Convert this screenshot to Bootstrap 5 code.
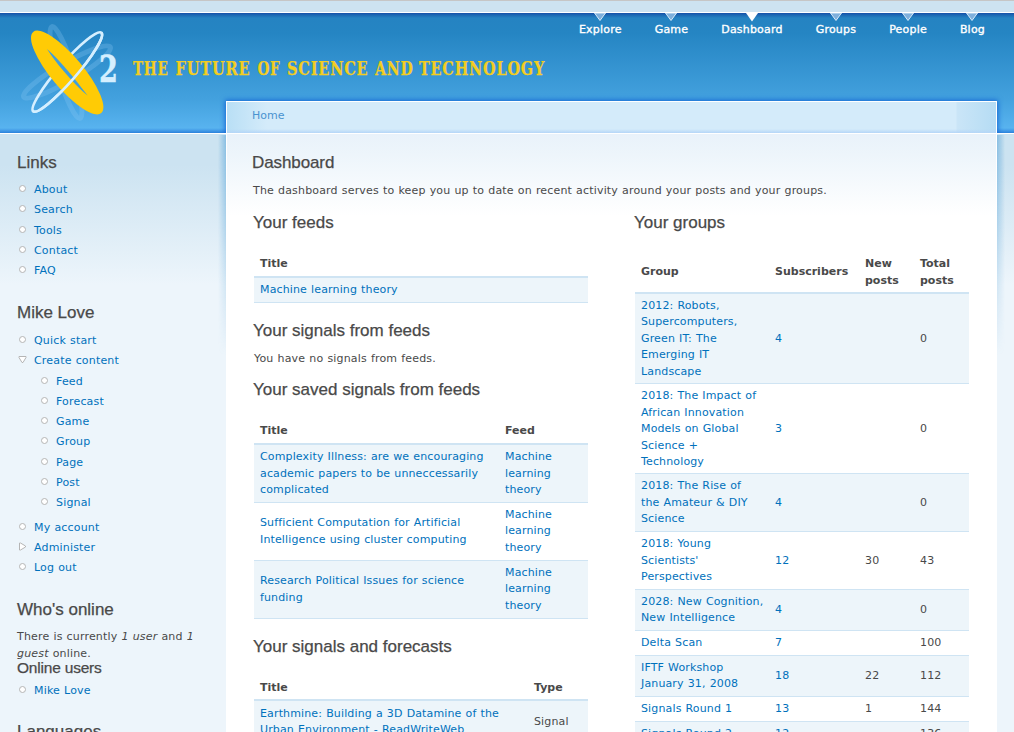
<!DOCTYPE html>
<html lang="en">
<head>
<meta charset="utf-8">
<title>Dashboard | X2</title>
<link href="https://cdn.jsdelivr.net/npm/bootstrap@5.3.0/dist/css/bootstrap.min.css" rel="stylesheet">
<script src="https://cdn.jsdelivr.net/npm/bootstrap@5.3.0/dist/js/bootstrap.bundle.min.js"></script>
<style>
html,body{height:732px;overflow:hidden}
body{font:11px/16.5px "DejaVu Sans",sans-serif;letter-spacing:.17px;word-spacing:.4px;color:#494949;background:#edf5fa linear-gradient(#cce3f1 134px,#cce3f1 165px,#edf5fb 285px) no-repeat}
a{color:#0071bc;text-decoration:none}
h1,h2,h3{font:17px/21px "Liberation Sans",sans-serif;letter-spacing:0;word-spacing:0;margin:0;color:#494949;-webkit-text-stroke:.25px #494949;white-space:nowrap}
h1{letter-spacing:-.1px}
.side h3{font-size:15.500px;letter-spacing:-.2px;line-height:20px;margin:-4px 0 1px}
.topline{height:13px;background:#cde3f1;border-top:1px solid #c6c6c6;border-bottom:1px solid #fff}
.masthead{height:121px;border-bottom:1px solid #fff;background:linear-gradient(#1750a8,#1c68b3 2px,#2583c2 5px,#2585c3 20px,#43a1de 86px,#58b3ef 115px,#3f97e6 118px,#2a81da 120px)}
.logo{width:560px;height:120px}
.slogan{font:700 18.500px "DejaVu Serif",serif;fill:#f3cd20;stroke:#f3cd20;stroke-width:.25px;letter-spacing:1px;word-spacing:0}
.menu{gap:33px;padding-right:29px}
.menu a{color:#fff;-webkit-text-stroke:.35px #fff;letter-spacing:.2px}
.menu svg{width:12px;height:9px}
.side{width:226px;padding:18px 17px 0;flex:none}
.side ul{list-style:none;margin:7px 0 20.500px;padding:0}
.side li{line-height:20.3px;padding-left:17px}
.side li>svg{float:left;width:9px;height:9px;margin:4px 0 0 -16px}
.side ul ul{margin:0 0 4px 5px}
.side .own{margin-top:8px;margin-bottom:20.500px}
.side .online{margin-top:3px;margin-bottom:20px}
.panel{width:771px;margin-top:-33px;position:relative;z-index:0;border:solid #fff;border-width:1px 1px 0;background:#fff}
.panel::before,.panel::after{content:"";position:absolute;top:33px;width:8px;height:220px;pointer-events:none}
.panel::before{left:-9px;background:linear-gradient(90deg,#5aa5d800,#5aa5d899);-webkit-mask:linear-gradient(#000,transparent)}
.panel::after{right:-9px;background:linear-gradient(-90deg,#5aa5d800,#5aa5d899);-webkit-mask:linear-gradient(#000,transparent)}
.crumb{height:32px;padding:6px 25px;border-bottom:1px solid #fff;background:linear-gradient(#fff0 27px,#b5d6f7 31px),linear-gradient(90deg,#b9dff5,#d4ebfa 40px,#d4ebfa 729px,#cae5f7 730px,#b5dcf4)}
.crumb a{color:#4a93d0;letter-spacing:0}
.glow{position:absolute;z-index:-1;left:-8px;right:-8px;top:-9px;height:40px;overflow:hidden}
.glow::before{content:"";position:absolute;left:7px;right:7px;top:8px;height:60px;box-shadow:0 0 5px 1px #1668d5}
.inner{padding:18px 0 0 25px;background:linear-gradient(#e9f2fa,#edf5fb 20px,#fff 82px)}
.intro{margin:10px 0 12px 1px}
.dcol{width:335px}
.data{width:334px;margin:21px 0 17px 1px;table-layout:fixed}
.data th{padding:2px 6px 2px;border-bottom:2px solid #cfe4f3;vertical-align:top;letter-spacing:0;word-spacing:0}
.data thead tr{height:23px}
.groups th{vertical-align:middle}
.groups thead tr{height:39px}
.data td{padding:3px 6px;border-bottom:1px solid #cfe4f3;vertical-align:middle;white-space:nowrap;letter-spacing:.14px}
.data tbody tr:nth-child(odd){background:#edf5fa}
.data .h90 td{padding:4px 6px 2px}
.data .h58 td{padding:3.500px 6px 2.500px}
.data .h91 td{padding:4px 6px 2.500px}
.data.forecasts{margin-top:20px}
.data.forecasts th{padding:3px 6px 1px}
.data.forecasts td{padding:5px 6px 3px}
.h91{height:91px}.h90{height:90px}.h58{height:58px}.h41{height:41px}.h26{height:26px}.h25{height:25px}
</style>
</head>
<body>
<svg class="d-none"><defs>
<symbol id="dot" viewBox="0 0 9 9"><circle cx="4.5" cy="4.5" r="3" fill="#fff" stroke="#b5b5b5"/></symbol>
<symbol id="down" viewBox="0 0 9 9"><path d="M1 2.500V1.500H8V2.500L5 7.500H4Z" fill="#fff" stroke="#b5b5b5"/></symbol>
<symbol id="right" viewBox="0 0 9 9"><path d="M1.500 1H2.500L7.500 4V5L2.500 8H1.500Z" fill="#fff" stroke="#b5b5b5"/></symbol>
<symbol id="tab" viewBox="0 0 12 9"><path d="M.5 0H11.500L6 7.500Z" fill="#7fb0dc" stroke="#d8ebfa"/></symbol>
<symbol id="tabon" viewBox="0 0 12 9"><path d="M0 0H12L6 8.500Z" fill="#fff"/></symbol>
</defs></svg>
<div class="topline"></div>
<header class="masthead d-flex justify-content-between">
<svg class="logo flex-shrink-0" viewBox="0 13 560 120">
<g fill="none" stroke="#8cc9f3" stroke-opacity=".28" stroke-width="5"><ellipse cx="66" cy="72.500" rx="8" ry="48" transform="rotate(-17 66 72.500)"/><ellipse cx="67" cy="72" rx="9" ry="50" transform="rotate(60 67 72)"/></g>
<ellipse cx="67.300" cy="72" rx="9" ry="52" transform="rotate(41 67.300 72)" fill="none" stroke="#d5efff" stroke-width="2.700"/>
<ellipse cx="67.200" cy="72.500" rx="16" ry="53" transform="rotate(-40 67.200 72.500)" fill="#ffcb05"/>
<path fill="#409edb" d="M47 49C57 57 76 80 87.500 95.500C77 87 57 65 47 49Z"/>
<path d="M0-52A9 52 0 0 1 0 52" transform="translate(67.300 72) rotate(41)" fill="none" stroke="#d5efff" stroke-width="2.700"/>
<text x="99" y="82" font-family="DejaVu Serif" font-weight="700" font-size="37" textLength="19" lengthAdjust="spacingAndGlyphs" fill="#d5efff" stroke="#d5efff" stroke-width=".5">2</text>
<g class="slogan">
<text x="133" y="74.500" textLength="35.500" lengthAdjust="spacingAndGlyphs">THE</text>
<text x="175.500" y="74.500" textLength="75" lengthAdjust="spacingAndGlyphs">FUTURE</text>
<text x="257.500" y="74.500" textLength="23" lengthAdjust="spacingAndGlyphs">OF</text>
<text x="287" y="74.500" textLength="81.500" lengthAdjust="spacingAndGlyphs">SCIENCE</text>
<text x="375" y="74.500" textLength="38.500" lengthAdjust="spacingAndGlyphs">AND</text>
<text x="419" y="74.500" textLength="126" lengthAdjust="spacingAndGlyphs">TECHNOLOGY</text>
</g>
</svg>
<nav class="menu d-flex">
<a class="d-flex flex-column align-items-center" href="#"><svg><use href="#tab"/></svg>Explore</a>
<a class="d-flex flex-column align-items-center" href="#"><svg><use href="#tab"/></svg>Game</a>
<a class="d-flex flex-column align-items-center" href="#"><svg><use href="#tabon"/></svg>Dashboard</a>
<a class="d-flex flex-column align-items-center" href="#"><svg><use href="#tab"/></svg>Groups</a>
<a class="d-flex flex-column align-items-center" href="#"><svg><use href="#tab"/></svg>People</a>
<a class="d-flex flex-column align-items-center" href="#"><svg><use href="#tab"/></svg>Blog</a>
</nav>
</header>
<div class="d-flex">
<aside class="side">
<h2>Links</h2>
<ul>
<li><svg><use href="#dot"/></svg><a href="#">About</a></li>
<li><svg><use href="#dot"/></svg><a href="#">Search</a></li>
<li><svg><use href="#dot"/></svg><a href="#">Tools</a></li>
<li><svg><use href="#dot"/></svg><a href="#">Contact</a></li>
<li><svg><use href="#dot"/></svg><a href="#">FAQ</a></li>
</ul>
<h2>Mike Love</h2>
<ul class="own">
<li><svg><use href="#dot"/></svg><a href="#">Quick start</a></li>
<li><svg><use href="#down"/></svg><a href="#">Create content</a>
<ul>
<li><svg><use href="#dot"/></svg><a href="#">Feed</a></li>
<li><svg><use href="#dot"/></svg><a href="#">Forecast</a></li>
<li><svg><use href="#dot"/></svg><a href="#">Game</a></li>
<li><svg><use href="#dot"/></svg><a href="#">Group</a></li>
<li><svg><use href="#dot"/></svg><a href="#">Page</a></li>
<li><svg><use href="#dot"/></svg><a href="#">Post</a></li>
<li><svg><use href="#dot"/></svg><a href="#">Signal</a></li>
</ul></li>
<li><svg><use href="#dot"/></svg><a href="#">My account</a></li>
<li><svg><use href="#right"/></svg><a href="#">Administer</a></li>
<li><svg><use href="#dot"/></svg><a href="#">Log out</a></li>
</ul>
<h2>Who's online</h2>
<p class="mb-0 text-nowrap" style="margin-top:9px">There is currently <em>1 user</em> and <em>1<br>guest</em> online.</p>
<h3>Online users</h3>
<ul class="online">
<li><svg><use href="#dot"/></svg><a href="#">Mike Love</a></li>
</ul>
<h2>Languages</h2>
</aside>
<main class="panel">
<div class="glow"></div>
<div class="crumb"><a href="#">Home</a></div>
<div class="inner">
<h1>Dashboard</h1>
<p class="intro">The dashboard serves to keep you up to date on recent activity around your posts and your groups.</p>
<div class="d-flex" style="gap:46px;padding-left:1px">
<section class="dcol">
<h2>Your feeds</h2>
<table class="data">
<thead><tr><th>Title</th></tr></thead>
<tbody><tr class="h26"><td><a href="#">Machine learning theory</a></td></tr></tbody>
</table>
<h2>Your signals from feeds</h2>
<p style="margin:10px 0 11.5px 1px">You have no signals from feeds.</p>
<h2>Your saved signals from feeds</h2>
<table class="data">
<colgroup><col style="width:245px"><col></colgroup>
<thead><tr><th>Title</th><th>Feed</th></tr></thead>
<tbody>
<tr class="h58"><td><a href="#">Complexity Illness: are we encouraging<br>academic papers to be unneccessarily<br>complicated</a></td><td><a href="#">Machine<br>learning<br>theory</a></td></tr>
<tr class="h58"><td><a href="#">Sufficient Computation for Artificial<br>Intelligence using cluster computing</a></td><td><a href="#">Machine<br>learning<br>theory</a></td></tr>
<tr class="h58"><td><a href="#">Research Political Issues for science<br>funding</a></td><td><a href="#">Machine<br>learning<br>theory</a></td></tr>
</tbody>
</table>
<h2>Your signals and forecasts</h2>
<table class="data forecasts">
<colgroup><col style="width:274px"><col></colgroup>
<thead><tr><th>Title</th><th>Type</th></tr></thead>
<tbody><tr class="h41"><td><a href="#">Earthmine: Building a 3D Datamine of the<br>Urban Environment - ReadWriteWeb</a></td><td>Signal</td></tr></tbody>
</table>
</section>
<section class="dcol">
<h2>Your groups</h2>
<table class="data groups">
<colgroup><col style="width:134px"><col style="width:90px"><col style="width:55px"><col></colgroup>
<thead><tr><th>Group</th><th>Subscribers</th><th>New<br>posts</th><th>Total<br>posts</th></tr></thead>
<tbody>
<tr class="h91"><td><a href="#">2012: Robots,<br>Supercomputers,<br>Green IT: The<br>Emerging IT<br>Landscape</a></td><td><a href="#">4</a></td><td></td><td>0</td></tr>
<tr class="h90"><td><a href="#">2018: The Impact of<br>African Innovation<br>Models on Global<br>Science +<br>Technology</a></td><td><a href="#">3</a></td><td></td><td>0</td></tr>
<tr class="h58"><td><a href="#">2018: The Rise of<br>the Amateur &amp; DIY<br>Science</a></td><td><a href="#">4</a></td><td></td><td>0</td></tr>
<tr class="h58"><td><a href="#">2018: Young<br>Scientists'<br>Perspectives</a></td><td><a href="#">12</a></td><td>30</td><td>43</td></tr>
<tr class="h41"><td><a href="#">2028: New Cognition,<br>New Intelligence</a></td><td><a href="#">4</a></td><td></td><td>0</td></tr>
<tr class="h25"><td><a href="#">Delta Scan</a></td><td><a href="#">7</a></td><td></td><td>100</td></tr>
<tr class="h41"><td><a href="#">IFTF Workshop<br>January 31, 2008</a></td><td><a href="#">18</a></td><td>22</td><td>112</td></tr>
<tr class="h25"><td><a href="#">Signals Round 1</a></td><td><a href="#">13</a></td><td>1</td><td>144</td></tr>
<tr class="h25"><td><a href="#">Signals Round 2</a></td><td><a href="#">12</a></td><td></td><td>136</td></tr>
</tbody>
</table>
</section>
</div>
</div>
</main>
</div>
</body>
</html>
